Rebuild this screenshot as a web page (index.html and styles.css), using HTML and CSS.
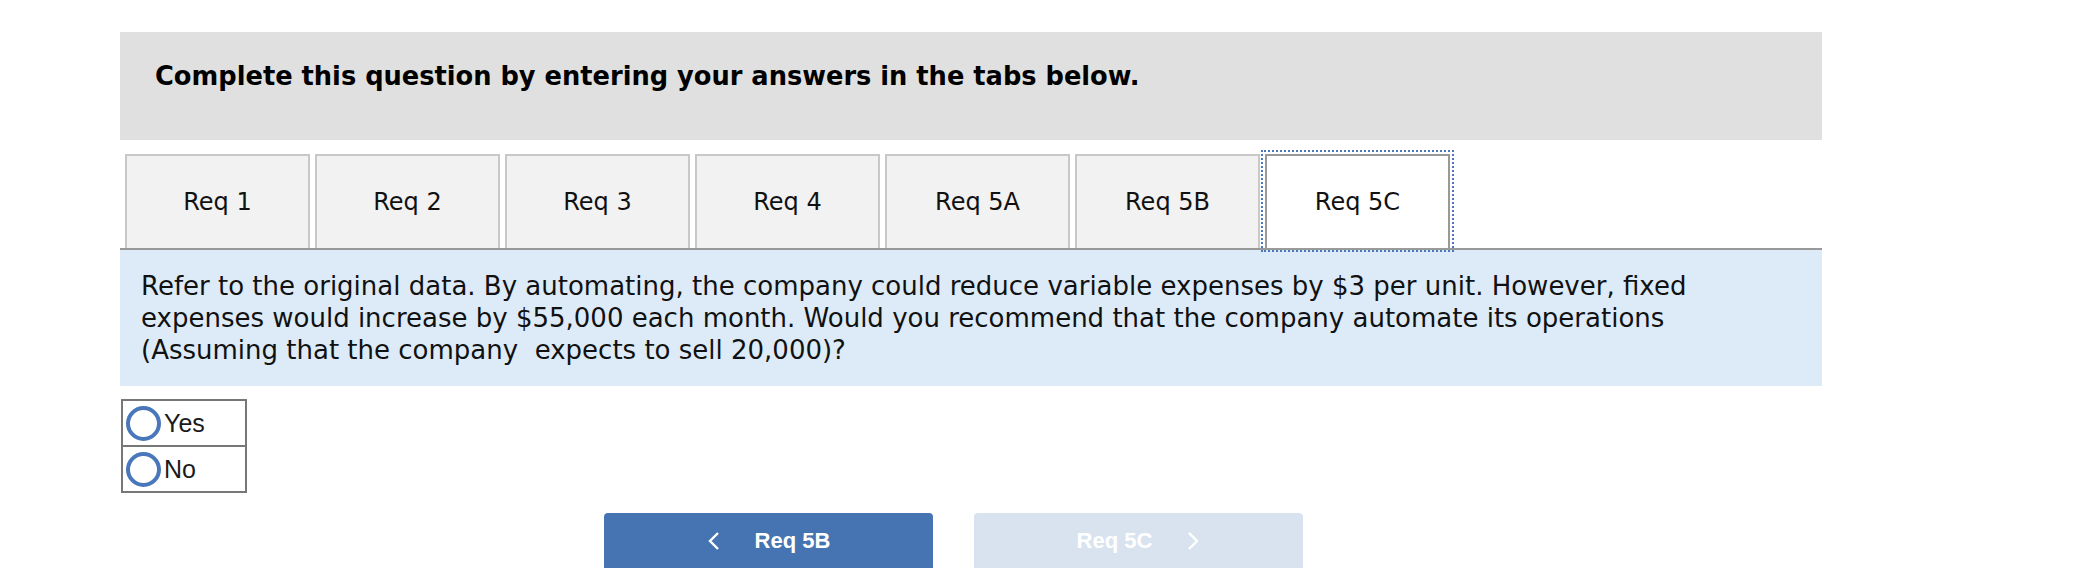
FILE: index.html
```html
<!DOCTYPE html>
<html lang="en">
<head>
    <meta charset="UTF-8">
    <meta name="viewport" content="width=device-width, initial-scale=1.0">
    <title>Req 5C</title>
    <link rel="stylesheet" href="styles.css">
</head>
<body>
    <div class="question">
        <div class="banner">
            <h2>Complete this question by entering your answers in the tabs below.</h2>
        </div>

        <div class="tabs">
            <button class="tab">Req 1</button>
            <button class="tab">Req 2</button>
            <button class="tab">Req 3</button>
            <button class="tab">Req 4</button>
            <button class="tab">Req 5A</button>
            <button class="tab">Req 5B</button>
            <button class="tab active">Req 5C</button>
        </div>

        <div class="prompt">
            Refer to the original data. By automating, the company could reduce variable expenses by $3 per unit. However, fixed<br>
            expenses would increase by $55,000 each month. Would you recommend that the company automate its operations<br>
            (Assuming that the company &nbsp;expects to sell 20,000)?
        </div>

        <div class="choices">
            <label class="choice"><span class="ring"></span>Yes</label>
            <label class="choice"><span class="ring"></span>No</label>
        </div>

        <div class="nav">
            <button class="nav-btn prev">
                <svg width="14" height="20" viewBox="0 0 14 20"><polyline points="11,2 3,10 11,18" fill="none" stroke="#fff" stroke-width="2.4"/></svg>
                <span>Req 5B</span>
            </button>
            <button class="nav-btn next" disabled>
                <span>Req 5C</span>
                <svg width="14" height="20" viewBox="0 0 14 20"><polyline points="3,2 11,10 3,18" fill="none" stroke="#fff" stroke-width="2.4"/></svg>
            </button>
        </div>
    </div>
</body>
</html>
```

FILE: styles.css
```css
body {
    margin: 0;
    font-family: "DejaVu Sans", Verdana, sans-serif;
    color: #111;
    background-color: #fff;
    overflow: hidden;
}
.question {
    width: 1702px;
    margin-left: 120px;
    padding-top: 32px;
}
.banner {
    height: 108px;
    box-sizing: border-box;
    padding: 28px 0 0 35px;
    background-color: #e0e0e0;
}
.banner h2 {
    margin: 0;
    font-size: 25.7px;
    line-height: 32px;
    font-weight: bold;
    color: #000;
}
.tabs {
    display: flex;
    gap: 5px;
    margin-top: 14px;
    padding-left: 5px;
    border-bottom: 2px solid #999;
}
.tab {
    width: 185px;
    height: 94px;
    box-sizing: border-box;
    border: 2px solid #c8c8c8;
    border-bottom: none;
    background-color: #f2f2f2;
    font-family: "DejaVu Sans", Verdana, sans-serif;
    font-size: 24px;
    color: #111;
    padding: 0;
}
.tab.active {
    background-color: #fff;
    border-color: #999;
    outline: 2px dotted #4a77bb;
    outline-offset: 2px;
}
.prompt {
    padding: 20px 20px 20px 21px;
    background-color: #ddebf8;
    font-size: 26px;
    line-height: 32px;
    color: #111;
    white-space: nowrap;
}
.choices {
    width: 126px;
    box-sizing: border-box;
    margin: 13px 0 0 1px;
    border: 2px solid #777;
}
.choice {
    display: flex;
    align-items: center;
    height: 44px;
    padding-left: 3px;
    font-family: "Liberation Sans", Arial, sans-serif;
    font-size: 25px;
    color: #1a1a1a;
}
.choice + .choice {
    border-top: 2px solid #777;
}
.ring {
    width: 35px;
    height: 35px;
    box-sizing: border-box;
    border: 4px solid #4a77bb;
    border-radius: 50%;
    margin-right: 3px;
}
.nav {
    display: flex;
    gap: 41px;
    margin: 20px 0 0 484px;
}
.nav-btn {
    display: flex;
    align-items: center;
    justify-content: center;
    gap: 34px;
    width: 329px;
    height: 66px;
    padding: 0 0 10px;
    border: none;
    border-radius: 4px;
    font-family: "Liberation Sans", Arial, sans-serif;
    font-size: 22px;
    font-weight: bold;
    color: #fff;
}
.nav-btn.prev {
    background-color: #4674b3;
}
.nav-btn.next {
    background-color: #d9e3ef;
}
```
